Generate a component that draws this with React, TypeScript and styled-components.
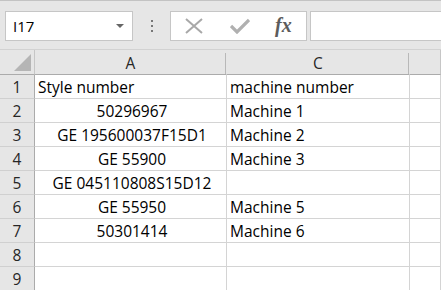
import React from 'react';
import styled, { createGlobalStyle } from 'styled-components';

const rows: { a: string; c: string; alignA: 'left' | 'center' }[] = [
  { a: 'Style number', c: 'machine number', alignA: 'left' },
  { a: '50296967', c: 'Machine 1', alignA: 'center' },
  { a: 'GE 195600037F15D1', c: 'Machine 2', alignA: 'center' },
  { a: 'GE 55900', c: 'Machine 3', alignA: 'center' },
  { a: 'GE 045110808S15D12', c: '', alignA: 'center' },
  { a: 'GE 55950', c: 'Machine 5', alignA: 'center' },
  { a: '50301414', c: 'Machine 6', alignA: 'center' },
  { a: '', c: '', alignA: 'left' },
  { a: '', c: '', alignA: 'left' },
];

const App = () => {
  return (
    <Page>
      <GlobalStyle />
      <Toolbar>
        <NameBox>
          <NameText>I17</NameText>
          <DropArrow />
        </NameBox>
        <Grip>
          <Dot />
          <Dot />
          <Dot />
        </Grip>
        <FormulaButtons>
          <IconSlot>
            <svg width="18" height="16" viewBox="0 0 18 16">
              <path d="M1 1 L17 15 M17 1 L1 15" stroke="#a8a8a8" strokeWidth="2" fill="none" />
            </svg>
          </IconSlot>
          <IconSlot>
            <svg width="20" height="16" viewBox="0 0 20 16">
              <path d="M1 8 L7 14 L19 2" stroke="#b0b0b0" strokeWidth="3.2" fill="none" />
            </svg>
          </IconSlot>
          <FxLabel>fx</FxLabel>
        </FormulaButtons>
        <FormulaInput />
      </Toolbar>

      <Sheet>
        <Corner>
          <CornerTriangle />
        </Corner>
        <ColHeader $hiddenAfter>A</ColHeader>
        <ColHeader $hiddenAfter>C</ColHeader>
        <ColHeader />

        {rows.map((r, i) => (
          <React.Fragment key={i}>
            <RowHeader>{i + 1}</RowHeader>
            <Cell $align={r.alignA}>{r.a}</Cell>
            <Cell $align="left">{r.c}</Cell>
            <Cell $align="left" />
          </React.Fragment>
        ))}
      </Sheet>
    </Page>
  );
};

const GlobalStyle = createGlobalStyle`
  html, body {
    margin: 0;
    padding: 0;
    background: #ffffff;
    overflow: hidden;
  }
  body {
    font-family: "Open Sans", "Liberation Sans", Arial, sans-serif;
  }
`;

const Page = styled.div`
  width: 441px;
  height: 290px;
  overflow: hidden;
  background: #ffffff;
`;

const Toolbar = styled.div`
  height: 49px;
  box-sizing: border-box;
  border-top: 1px solid #c3c3c3;
  background: #e6e6e6;
  display: flex;
  align-items: flex-start;
  padding-top: 10px;
  padding-left: 5px;
`;

const NameBox = styled.div`
  width: 128px;
  height: 30px;
  box-sizing: border-box;
  background: #ffffff;
  border: 1px solid #c6c6c6;
  display: flex;
  align-items: center;
  justify-content: space-between;
  padding: 0 8px 0 7px;
`;

const NameText = styled.span`
  font-size: 15px;
  color: #000;
`;

const DropArrow = styled.span`
  width: 0;
  height: 0;
  border-left: 4px solid transparent;
  border-right: 4px solid transparent;
  border-top: 4px solid #666;
`;

const Grip = styled.div`
  width: 37px;
  height: 30px;
  display: flex;
  flex-direction: column;
  align-items: center;
  justify-content: center;
  gap: 3px;
`;

const Dot = styled.span`
  width: 2px;
  height: 2px;
  background: #777;
`;

const FormulaButtons = styled.div`
  width: 137px;
  height: 30px;
  box-sizing: border-box;
  background: #ffffff;
  border: 1px solid #c6c6c6;
  display: flex;
  align-items: center;
  padding-left: 14px;
  gap: 27px;
`;

const IconSlot = styled.span`
  display: flex;
  align-items: center;
`;

const FxLabel = styled.span`
  font-family: "Liberation Serif", "Times New Roman", serif;
  font-style: italic;
  font-weight: bold;
  font-size: 20px;
  color: #5c5c5c;
  margin-left: -2px;
  margin-top: -2px;
`;

const FormulaInput = styled.div`
  flex: 1;
  margin-left: 3px;
  height: 30px;
  box-sizing: border-box;
  background: #ffffff;
  border: 1px solid #c6c6c6;
  border-right: none;
`;

const Sheet = styled.div`
  display: grid;
  grid-template-columns: 35px 192px 183px 1fr;
  grid-auto-rows: 24px;
  grid-template-rows: 25px;
  border-top: 1px solid #d2d2d2;
`;

const Corner = styled.div`
  position: relative;
  background: #e6e6e6;
  border-right: 1px solid #c6c6c6;
  border-bottom: 1px solid #ababab;
`;

const CornerTriangle = styled.div`
  position: absolute;
  right: 3px;
  bottom: 3px;
  width: 0;
  height: 0;
  border-left: 17px solid transparent;
  border-bottom: 17px solid #b5b5b5;
`;

const ColHeader = styled.div<{ $hiddenAfter?: boolean }>`
  position: relative;
  background: #e6e6e6;
  border-bottom: 1px solid #ababab;
  border-right: 1px solid ${(p) => (p.$hiddenAfter ? 'transparent' : '#c6c6c6')};
  font-size: 15.5px;
  color: #262626;
  display: flex;
  align-items: center;
  justify-content: center;
  padding-top: 1px;

  &::after {
    content: '';
    display: ${(p) => (p.$hiddenAfter ? 'block' : 'none')};
    position: absolute;
    top: 3px;
    bottom: 0;
    right: -3px;
    border-left: 1px solid #b8b8b8;
    border-right: 1px solid #b8b8b8;
    width: 2px;
  }
`;

const RowHeader = styled.div`
  background: #e6e6e6;
  border-right: 1px solid #ababab;
  border-bottom: 1px solid #d0d0d0;
  font-size: 15.5px;
  color: #262626;
  display: flex;
  align-items: center;
  justify-content: center;
  box-sizing: border-box;
`;

const Cell = styled.div<{ $align: 'left' | 'center' }>`
  border-right: 1px solid #d4d4d4;
  border-bottom: 1px solid #d4d4d4;
  font-size: 15.5px;
  color: #000;
  white-space: nowrap;
  overflow: visible;
  display: flex;
  align-items: center;
  justify-content: ${(p) => (p.$align === 'center' ? 'center' : 'flex-start')};
  padding: 0 0 0 3px;
  box-sizing: border-box;
`;

export default App;
